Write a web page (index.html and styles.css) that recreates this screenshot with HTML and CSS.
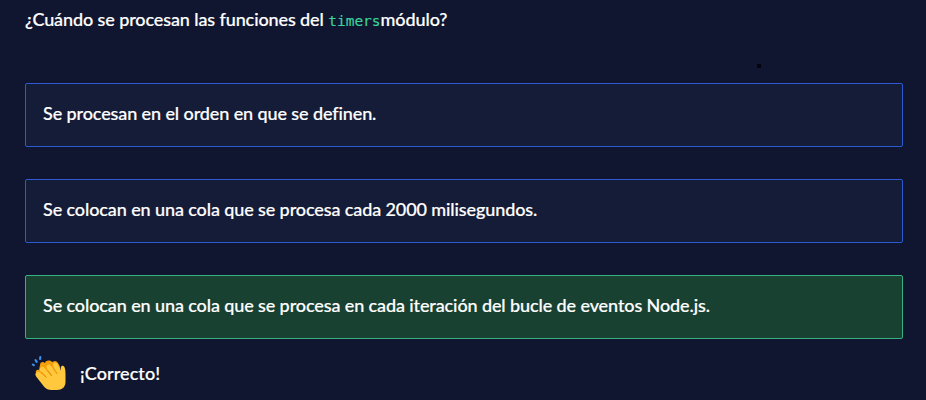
FILE: index.html
```html
<!DOCTYPE html>
<html lang="es">
<head>
<meta charset="utf-8">
<title>Quiz</title>
<link rel="stylesheet" href="styles.css">
</head>
<body>
<main class="quiz">
  <p class="question"><span class="prompt">¿Cuándo se procesan las funciones del</span> <code>timers</code><span class="module">módulo?</span></p>
  <div class="answers">
    <div class="answer"><span>Se procesan en el orden en que se definen.</span></div>
    <div class="answer"><span>Se colocan en una cola que se procesa cada 2000 milisegundos.</span></div>
    <div class="answer correct"><span>Se colocan en una cola que se procesa en cada iteración del bucle de eventos Node.js.</span></div>
  </div>
  <div class="feedback">
    <svg class="clap" viewBox="0 0 36 36" width="36" height="36" aria-hidden="true">
      <path fill="#f59f0a" d="M5 18C4 16 6 14 8 15L9 10C9 7 12 6 14 8C15 5 19 5 21 7L24 6C26 6 28 9 29 12L30 25L14 28Z"/>
      <path fill="#ffc83d" d="M5.500 17.500C7 16 9 17 10.500 19L9 15C8.500 12 11.500 10.500 13.500 13L17 17L15.500 12C15.500 9 18.500 8.500 20 11L24 16L22 10C22 7 25 7 26.500 9L30 16C29 11 31 10 32.500 11C34 12 34.500 15 34.500 19V27C34.500 32 31 35 26 35H20C16 35 13 32 11 29L5.500 22C4 20 4 18.500 5.500 17.500Z"/>
      <path d="M10.500 17.500L15 22M16.500 15.500L20.500 20.500M22.500 13.500L26 18.500" fill="none" stroke="#ec9810" stroke-width="1.300" stroke-linecap="round"/>
      <path d="M1.800 9.500l1 .7M4.500 5l1.200 1.800M9.300 2l-.2 2" fill="none" stroke="#3894ee" stroke-width="2.100" stroke-linecap="round"/>
    </svg>
    <span class="result">¡Correcto!</span>
  </div>
</main>
<span class="dot"></span>
</body>
</html>
```
FILE: styles.css
```css
* { box-sizing: border-box; }
body {
  margin: 0;
  height: 400px;
  overflow: hidden;
  background: #10162f;
  color: #fff;
  font: 500 18px/24px Lato, "Open Sans", sans-serif;
  letter-spacing: -.105px;
  -webkit-text-stroke: .2px #fff;
}
.quiz { padding: 7px 23px 0 25px; }
.question { margin: 0; height: 76px; white-space: pre; }
.question code {
  font: 14.5px/20px "DejaVu Sans Mono", monospace;
  letter-spacing: 0;
  color: #3bd29b;
  -webkit-text-stroke: .15px #3bd29b;
}
.answers { display: grid; gap: 32px; }
.answer {
  display: flex;
  align-items: center;
  height: 64px;
  padding: 0 17px 4px;
  border: 1px solid #2c5bd0;
  border-radius: 2px;
  background: #151c38;
  white-space: nowrap;
}
.answer.correct { border-color: #39b083; background: #184132; }
.feedback { display: flex; align-items: center; height: 36px; margin: 16px 0 0 6px; }
.result { margin-left: 13px; letter-spacing: .1px; }
.dot {
  position: absolute;
  left: 757px;
  top: 64px;
  width: 4px;
  height: 4px;
  border-radius: 1px;
  background: #02040d;
}
```
